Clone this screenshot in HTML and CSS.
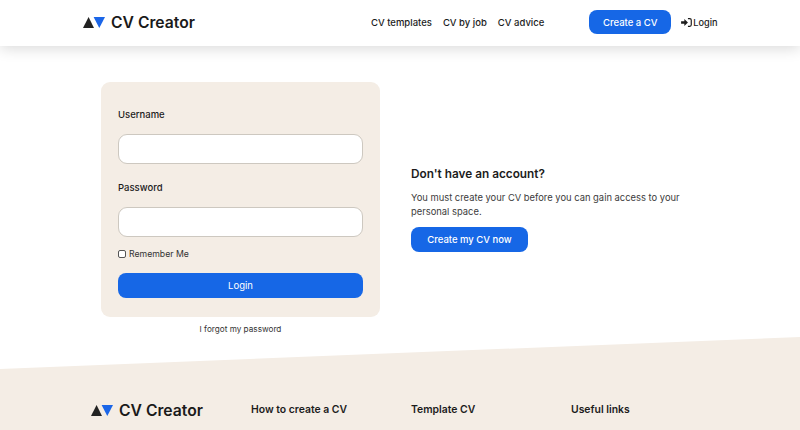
FILE: index.html
```html
<!DOCTYPE html>
<html lang="en">
<head>
<meta charset="utf-8">
<title>CV Creator - Login</title>
<link rel="stylesheet" href="styles.css">
</head>
<body>
<header class="site-header">
  <a class="logo" href="#">
    <svg class="logo-mark" viewBox="0 0 22 11" aria-hidden="true"><path class="mark-dark" d="M0 11 5.6 0 11 11Z"/><path class="mark-blue" d="M10.6 0H22L16.3 11Z"/></svg>
    <span>CV Creator</span>
  </a>
  <nav class="main-nav">
    <a href="#">CV templates</a>
    <a href="#">CV by job</a>
    <a href="#">CV advice</a>
  </nav>
  <a class="btn btn-nav" href="#">Create a CV</a>
  <a class="login-link" href="#">
    <svg class="login-icon" viewBox="0 0 12 10" aria-hidden="true"><path d="M0 3.6H3.6V1.2L7.6 5 3.6 8.8V6.4H0Z"/><path class="login-bracket" d="M7.6.7H9.6Q11.3.7 11.3 2.4V7.6Q11.3 9.3 9.6 9.3H7.6"/></svg>
    <span>Login</span>
  </a>
</header>
<main class="content">
  <div class="login-col">
    <form class="card">
      <label class="field-label" for="user">Username</label>
      <input class="text-input" id="user" type="text">
      <label class="field-label" for="pass">Password</label>
      <input class="text-input" id="pass" type="password">
      <label class="remember"><input class="check" type="checkbox"><span>Remember Me</span></label>
      <button class="btn btn-login" type="button">Login</button>
    </form>
    <a class="forgot" href="#">I forgot my password</a>
  </div>
  <section class="signup">
    <h2>Don't have an account?</h2>
    <p>You must create your CV before you can gain access to your personal space.</p>
    <a class="btn btn-create" href="#">Create my CV now</a>
  </section>
</main>
<footer class="site-footer">
  <div class="footer-inner">
    <a class="logo logo-footer" href="#">
      <svg class="logo-mark" viewBox="0 0 22 11" aria-hidden="true"><path class="mark-dark" d="M0 11 5.6 0 11 11Z"/><path class="mark-blue" d="M10.6 0H22L16.3 11Z"/></svg>
      <span>CV Creator</span>
    </a>
    <div class="foot-col"><h3>How to create a CV</h3><a href="#">How to write</a></div>
    <div class="foot-col"><h3>Template CV</h3><a href="#">Modern templates</a></div>
    <div class="foot-col"><h3>Useful links</h3><a href="#">Blog</a></div>
  </div>
</footer>
</body>
</html>
```
FILE: styles.css
```css
* { box-sizing: border-box; }
html, body { margin: 0; padding: 0; }
body {
  width: 800px;
  height: 430px;
  overflow: hidden;
  background: #fff;
  color: #1c1c1c;
  font-family: "Inter", "Liberation Sans", sans-serif;
}
a { color: inherit; text-decoration: none; }

.site-header {
  position: relative;
  height: 46px;
  display: flex;
  align-items: center;
  padding: 0 0 2px 83px;
  background: #fff;
  box-shadow: 0 2px 14px rgba(0, 0, 0, .16);
}
.logo { display: flex; align-items: center; gap: 6px; font-size: 15.7px; font-weight: 600; color: #1a1a1a; }
.logo-mark { width: 22px; height: 11px; display: block; }
.mark-dark { fill: #222; }
.mark-blue { fill: #1b66e8; }
.main-nav { display: flex; gap: 11px; margin-left: 176px; font-size: 9.5px; font-weight: 500; }
.btn {
  display: flex;
  align-items: center;
  justify-content: center;
  background: #1667e6;
  color: #fff;
  border: 0;
  border-radius: 8px;
  font-family: inherit;
  font-weight: 500;
}
.btn-nav { width: 82px; height: 24px; margin-left: 45px; font-size: 9.5px; }
.login-link { display: flex; align-items: center; gap: 1px; margin-left: 10px; font-size: 9.2px; font-weight: 500; }
.login-icon { width: 11px; height: 9px; fill: #1c1c1c; }
.login-bracket { fill: none; stroke: #1c1c1c; stroke-width: 1.3; }

.content { display: flex; align-items: flex-start; padding: 36px 0 0 101px; gap: 31px; }
.login-col { width: 279px; display: flex; flex-direction: column; align-items: center; }
.card {
  width: 100%;
  height: 235px;
  padding: 26px 17px 0;
  background: #f4ede5;
  border-radius: 9px;
  display: flex;
  flex-direction: column;
}
.field-label { font-size: 9.5px; font-weight: 500; line-height: 13px; }
.text-input {
  width: 100%;
  height: 30px;
  margin: 13px 0 17px;
  background: #fff;
  border: 1px solid #cdc8c0;
  border-radius: 9px;
}
.remember { display: flex; align-items: center; gap: 3px; margin-top: -6px; font-size: 8.7px; line-height: 12px; color: #333; }
.check { width: 8px; height: 8px; margin: 0; appearance: none; background: #fff; border: 1px solid #555; border-radius: 2px; }
.btn-login { width: 100%; height: 25.5px; margin-top: 12.5px; font-size: 9.5px; font-weight: 400; }
.forgot { margin-top: 6px; font-size: 8.2px; line-height: 12px; color: #333; }

.signup { width: 280px; margin-top: 84px; }
.signup h2 { margin: 0; font-size: 11.8px; line-height: 16px; font-weight: 600; }
.signup p { margin: 9px 0 0; font-size: 9.4px; line-height: 13.5px; color: #3c3c3c; }
.btn-create { width: 117px; height: 24.5px; margin-top: 9px; font-size: 9.5px; }

.site-footer {
  position: absolute;
  left: 0;
  right: 0;
  top: 337px;
  height: 93px;
  background: #f4ede5;
  clip-path: polygon(0 32px, 100% 0, 100% 100%, 0 100%);
}
.footer-inner { display: flex; padding: 64px 0 0 91px; }
.logo-footer { width: 160px; height: 18px; gap: 6px; }
.foot-col { width: 160px; padding-top: 1px; font-size: 9px; color: #333; }
.foot-col h3 { margin: 0 0 10px; font-size: 10.4px; line-height: 16px; font-weight: 600; color: #1c1c1c; }
```
